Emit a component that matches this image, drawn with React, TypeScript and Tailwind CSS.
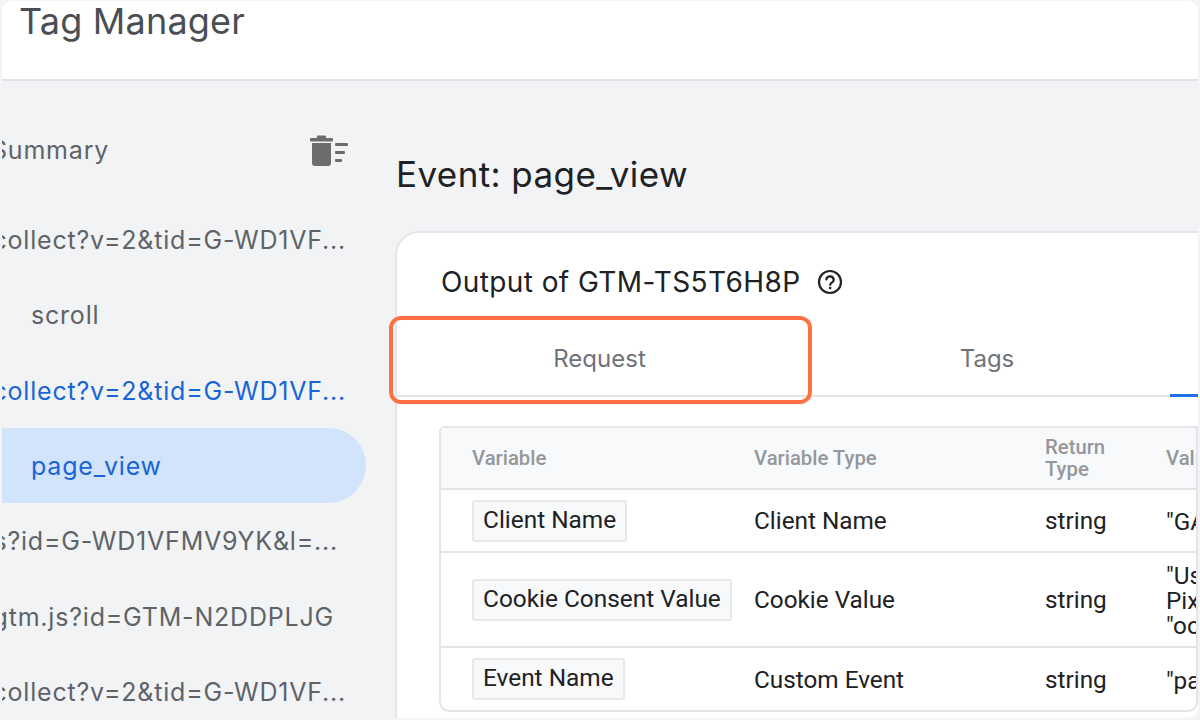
const SANS = "font-['Inter','Open_Sans',sans-serif]";

function TrashList() {
  return (
    <svg width="40" height="34" viewBox="0 0 40 34" fill="#6b6c6e">
      <rect x="1" y="4" width="23" height="3.5" rx="1" />
      <rect x="8" y="1.5" width="9" height="3" rx="1" />
      <path d="M3 9h19v20a3 3 0 0 1-3 3H6a3 3 0 0 1-3-3z" />
      <rect x="26" y="9" width="13" height="3" rx="1" />
      <rect x="26" y="17" width="10" height="3" rx="1" />
      <rect x="26" y="25" width="7" height="3" rx="1" />
    </svg>
  );
}

function HelpIcon() {
  return (
    <svg width="26" height="26" viewBox="0 0 26 26" fill="none" stroke="#202124" strokeWidth="2.2">
      <circle cx="13" cy="13" r="11" />
      <path d="M9.3 10.5a3.8 3.8 0 0 1 7.5.3c0 2.6-3.6 2.9-3.6 5" strokeLinecap="round" />
      <circle cx="13.2" cy="19" r="0.6" fill="#202124" strokeWidth="1.4" />
    </svg>
  );
}

function SideRow({ text, blue, end = "pr-[20px]" }: { text: string; blue?: boolean; end?: string }) {
  return (
    <div className={`flex h-[75.3px] items-center justify-end overflow-hidden whitespace-nowrap pt-[2px] text-[25px] tracking-[0.8px] ${end} ${blue ? "text-[#1a65d6]" : "text-[#5f6368]"}`}>
      {text}
    </div>
  );
}

function Chip({ children }: { children: string }) {
  return (
    <span className="inline-block h-[42px] rounded-[3px] border-2 border-[#e6e8eb] bg-[#f8f9fa] px-[9px] text-[24.4px] leading-[36px] text-[#202124]">
      {children}
    </span>
  );
}

function Row({ chip, type, value, h }: { chip: string; type: string; value: string[]; h: string }) {
  return (
    <div className={`flex items-center border-t-2 border-[#e3e5e8] text-[24.3px] text-[#202124] ${h}`}>
      <div className="flex w-[313px] shrink-0 items-center pl-[31px]"><Chip>{chip}</Chip></div>
      <div className="w-[291px] shrink-0 whitespace-nowrap pt-[2px]">{type}</div>
      <div className="w-[121px] shrink-0 pt-[2px]">string</div>
      <div className="shrink-0 whitespace-pre pt-[2px] leading-[25px]">{value.join("\n")}</div>
    </div>
  );
}

export default function App() {
  return (
    <div className="h-[720px] w-[1200px] overflow-hidden bg-[#f4f4f7] font-['Roboto',sans-serif]">
      <div className="ml-[2px] mt-[1px] flex h-[717px] w-[1196px] flex-col overflow-hidden rounded-[10px] bg-[#f1f3f5]">
        <header className={`flex h-[80px] shrink-0 border-b-2 border-[#e0e2e5] bg-white pl-[17px] text-[36px] leading-[40px] text-[#4a4e54] ${SANS}`}>
          <span className="tracking-[0.2px]">Tag Manager</span>
        </header>
        <div className="flex min-h-0 flex-1">
          <aside className={`w-[364px] shrink-0 pt-[32px] ${SANS}`}>
            <div className="mb-[14px] flex h-[75.3px] items-center justify-between overflow-hidden pr-[17px] text-[25px] tracking-[0.8px] text-[#5f6368]">
              <span className="ml-[-11px]">Summary</span>
              <TrashList />
            </div>
            <SideRow text="collect?v=2&tid=G-WD1VF..." />
            <div className="flex h-[75.3px] items-center pl-[29px] pt-[2px] text-[25px] tracking-[0.8px] text-[#5f6368]">scroll</div>
            <SideRow blue text="collect?v=2&tid=G-WD1VF..." />
            <div className="flex h-[75.3px] items-center rounded-r-[38px] bg-[#d2e3fc] pl-[29px] pt-[2px] text-[25px] tracking-[0.8px] text-[#1a65d6]">page_view</div>
            <SideRow end="pr-[28px]" text="s?id=G-WD1VFMV9YK&l=..." />
            <SideRow end="pr-[32px]" text="gtm.js?id=GTM-N2DDPLJG" />
            <SideRow text="collect?v=2&tid=G-WD1VF..." />
          </aside>
          <main className="min-w-0 flex-1 pl-[29px]">
            <h1 className={`pb-[28px] pl-[1px] pt-[64px] text-[35px] leading-[58px] tracking-[0.4px] text-[#202124] ${SANS}`}>Event: page_view</h1>
            <section className="relative h-[490px] rounded-tl-[24px] border-l-2 border-t-2 border-[#e3e5e8] bg-white">
              <div className={`flex h-[84px] items-center gap-[16px] pl-[44px] pt-[14px] text-[28px] tracking-[0.4px] text-[#202124] ${SANS}`}>
                <span>Output of GTM-TS5T6H8P</span>
                <HelpIcon />
              </div>
              <div className={`relative flex h-[80px] items-center border-b-2 border-[#e3e5e8] pt-[6px] text-[24px] text-[#6f7378] ${SANS}`}>
                <div className="w-[405px] text-center">Request</div>
                <div className="w-[370px] text-center">Tags</div>
                <div className="absolute bottom-[-2px] right-0 h-[3px] w-[28px] bg-[#1a73e8]" />
              </div>
              <div className="absolute left-[-8px] top-[83px] h-[88px] w-[423px] rounded-[12px] border-[4px] border-[#ff7043]" />
              <div className="ml-[42px] mt-[29px] h-[286px] overflow-hidden rounded-bl-[10px] rounded-br-[10px] rounded-tl-[6px] border-2 border-[#e3e5e8]">
                <div className="flex h-[60px] items-center bg-[#f8f9fa] text-[20.3px] font-medium leading-[22px] text-[#94979c]">
                  <div className="w-[313px] shrink-0 pl-[31px]">Variable</div>
                  <div className="w-[291px] shrink-0">Variable Type</div>
                  <div className="w-[121px] shrink-0">Return<br />Type</div>
                  <div className="shrink-0">Value</div>
                </div>
                <Row chip="Client Name" type="Client Name" value={['"GA4"']} h="h-[63px]" />
                <Row chip="Cookie Consent Value" type="Cookie Value" value={['"Usage', 'Pixel', '"ooo']} h="h-[95px]" />
                <Row chip="Event Name" type="Custom Event" value={['"page_view"']} h="h-[64px]" />
              </div>
            </section>
          </main>
        </div>
      </div>
    </div>
  );
}
